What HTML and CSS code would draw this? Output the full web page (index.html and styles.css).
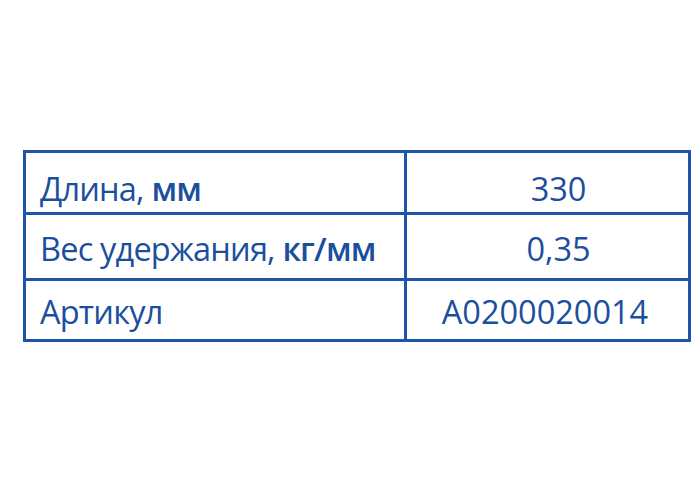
FILE: index.html
```html
<!DOCTYPE html>
<html lang="ru">
<head>
<meta charset="utf-8">
<link rel="stylesheet" href="styles.css">
</head>
<body>
<div class="spec">
  <div class="cell label r1"><span>Длина, <b>мм</b></span></div>
  <div class="cell value r1 shift"><span>330</span></div>
  <div class="cell label r2"><span>Вес удержания, <b>кг/мм</b></span></div>
  <div class="cell value r2 shift"><span>0,35</span></div>
  <div class="cell label r3"><span>Артикул</span></div>
  <div class="cell value r3 back"><span>А0200020014</span></div>
</div>
</body>
</html>
```
FILE: styles.css
```css
html, body {
  margin: 0;
  padding: 0;
  background: #ffffff;
}
body {
  width: 700px;
  height: 500px;
  overflow: hidden;
  font-family: "Open Sans", "Noto Sans", sans-serif;
}
.spec {
  margin: 150px 0 0 23px;
  width: 668px;
  box-sizing: border-box;
  display: grid;
  grid-template-columns: 378px 281px;
  grid-template-rows: 59px 63px 58px;
  gap: 3px;
  padding: 3px;
  background: #1d55a8;
}
.cell {
  background: #ffffff;
  color: #1b4f9e;
  font-size: 32.5px;
  line-height: 44px;
  display: flex;
  align-items: flex-start;
  box-sizing: border-box;
  white-space: nowrap;
}
.label {
  padding-left: 14px;
  letter-spacing: -0.8px;
}
.value {
  justify-content: center;
}
.shift {
  padding-left: 22px;
}
.back {
  padding-right: 5px;
}
.r1 { padding-top: 14px; }
.r2 { padding-top: 12px; }
.r3 { padding-top: 9px; }
.cell b {
  font-weight: 600;
}
```
